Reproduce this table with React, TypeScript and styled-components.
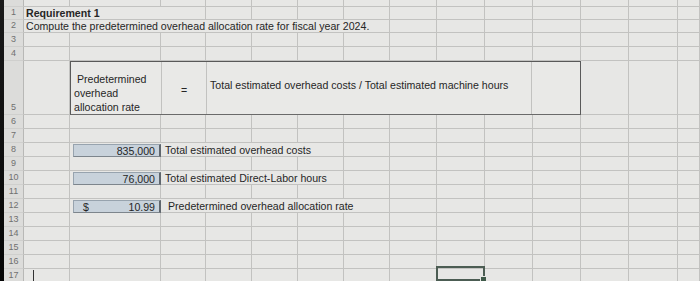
import * as React from 'react';
import styled, { createGlobalStyle } from 'styled-components';

const GlobalStyle = createGlobalStyle`
  html, body {
    margin: 0;
    padding: 0;
    background: #e6e6e4;
  }
  body {
    font-family: 'Liberation Sans', Arial, sans-serif;
  }
`;

const GRID = '#c2c2c0';
const INK = '#262626';

const Frame = styled.div`
  display: flex;
  width: 700px;
  height: 281px;
  overflow: hidden;
`;

const Bezel = styled.div`
  flex: 0 0 4px;
  background: linear-gradient(#1a1a1a, #050505);
`;

const Sheet = styled.div`
  flex: 1;
  display: grid;
  grid-template-columns: 20px 46px 91px 45px 46px 46px 46px 46px 47px 48px 48px 48px 48px 49px 1fr;
  grid-template-rows: 7px 13px 13px 14px 14px 54px repeat(12, 14px);
  background: #e7e7e5;
  font-size: 10.6px;
  color: ${INK};
`;

const RowNum = styled.div`
  display: flex;
  align-items: flex-end;
  justify-content: center;
  padding-bottom: 1px;
  background: #dcdcda;
  border-right: 1px solid #b8b8b6;
  border-bottom: 1px solid #cfcfcd;
  font-size: 9px;
  line-height: 12px;
  color: #707070;
`;

const Cell = styled.div<{ $span?: number; $pad?: number }>`
  box-sizing: border-box;
  grid-column: span ${(p) => p.$span ?? 1};
  display: flex;
  align-items: center;
  padding-left: ${(p) => p.$pad ?? 2}px;
  border-right: 1px solid ${GRID};
  border-bottom: 1px solid ${GRID};
  white-space: nowrap;
  overflow: visible;
  min-width: 0;
`;

const Bold = styled.span`
  font-weight: bold;
`;

// merged block for the rate formula (B..K)
const FormulaBox = styled.div`
  box-sizing: border-box;
  grid-column: span 10;
  display: grid;
  grid-template-columns: 91px 45px 1fr 48px;
  border: 1px solid #595959;
  border-bottom-color: #6a6a6a;
  background: #e9e9e7;
`;

const FormulaPart = styled.div<{ $align?: string; $edge?: boolean }>`
  display: flex;
  flex-direction: column;
  justify-content: ${(p) => p.$align ?? 'center'};
  padding: 0 3px;
  line-height: 14px;
  border-right: ${(p) => (p.$edge ? `1px solid ${GRID}` : 'none')};
`;

const Equals = styled(FormulaPart)`
  align-items: center;
  padding-top: 4px;
`;

const MainFormula = styled(FormulaPart)`
  padding-bottom: 7px;
`;

const InputCell = styled.div<{ $money?: boolean }>`
  box-sizing: border-box;
  display: flex;
  align-items: center;
  justify-content: ${(p) => (p.$money ? 'space-between' : 'flex-end')};
  padding: 0 4px 0 ${(p) => (p.$money ? 9 : 4)}px;
  margin: 1px 0 0 3px;
  background: #c8d2db;
  border: 1px solid #97a3ae;
  border-right: 2px solid #5f666d;
  border-bottom-color: #7d858c;
`;

const Caret = styled.span`
  display: inline-block;
  width: 1px;
  height: 12px;
  margin-left: 9px;
  background: #333;
`;

const Selected = styled.div`
  position: relative;
  box-sizing: border-box;
  border: 2px solid #4c5d53;
  margin: -3px 0 2px -1px;
`;

const FillHandle = styled.span`
  position: absolute;
  right: -4px;
  bottom: -4px;
  width: 5px;
  height: 5px;
  background: #3f5a49;
  border: 1px solid #e7e7e5;
`;

const blanks = (n: number, key: string) =>
  Array.from({ length: n }, (_, i) => <Cell key={`${key}-${i}`} />);

export default function App() {
  const rows: React.ReactNode[] = [];

  const push = (num: string, cells: React.ReactNode[]) => {
    rows.push(<RowNum key={`n${num}`}>{num}</RowNum>, ...cells);
  };

  push('', blanks(14, 'r0'));
  push('1', [
    <Cell key="req" $span={3}>
      <Bold>Requirement 1</Bold>
    </Cell>,
    ...blanks(11, 'r1'),
  ]);
  push('2', [
    <Cell key="task" $span={7}>
      Compute the predetermined overhead allocation rate for fiscal year 2024.
    </Cell>,
    ...blanks(7, 'r2'),
  ]);
  push('3', blanks(14, 'r3'));
  push('4', blanks(14, 'r4'));
  push('5', [
    <Cell key="a5" />,
    <FormulaBox key="formula">
      <FormulaPart $align="flex-end" $edge>
        <span>&nbsp;Predetermined</span>
        <span>overhead</span>
        <span>allocation rate</span>
      </FormulaPart>
      <Equals $edge>=</Equals>
      <MainFormula $edge>
        Total estimated overhead costs / Total estimated machine hours
      </MainFormula>
      <FormulaPart />
    </FormulaBox>,
    ...blanks(3, 'r5'),
  ]);
  push('6', blanks(14, 'r6'));
  push('7', blanks(14, 'r7'));
  push('8', [
    <Cell key="a8" />,
    <InputCell key="costs">835,000</InputCell>,
    <Cell key="l8" $span={4} $pad={4}>
      Total estimated overhead costs
    </Cell>,
    ...blanks(8, 'r8'),
  ]);
  push('9', blanks(14, 'r9'));
  push('10', [
    <Cell key="a10" />,
    <InputCell key="hours">76,000</InputCell>,
    <Cell key="l10" $span={4} $pad={4}>
      Total estimated Direct-Labor hours
    </Cell>,
    ...blanks(8, 'r10'),
  ]);
  push('11', blanks(14, 'r11'));
  push('12', [
    <Cell key="a12" />,
    <InputCell key="rate" $money>
      <span>$</span>
      <span>10.99</span>
    </InputCell>,
    <Cell key="l12" $span={5} $pad={7}>
      Predetermined overhead allocation rate
    </Cell>,
    ...blanks(7, 'r12'),
  ]);
  for (let r = 13; r <= 16; r++) push(String(r), blanks(14, `r${r}`));
  push('17', [
    <Cell key="a17" $pad={0}>
      <Caret />
    </Cell>,
    ...blanks(7, 'r17a'),
    <Selected key="sel">
      <FillHandle />
    </Selected>,
    ...blanks(5, 'r17b'),
  ]);

  return (
    <>
      <GlobalStyle />
      <Frame>
        <Bezel />
        <Sheet>{rows}</Sheet>
      </Frame>
    </>
  );
}
